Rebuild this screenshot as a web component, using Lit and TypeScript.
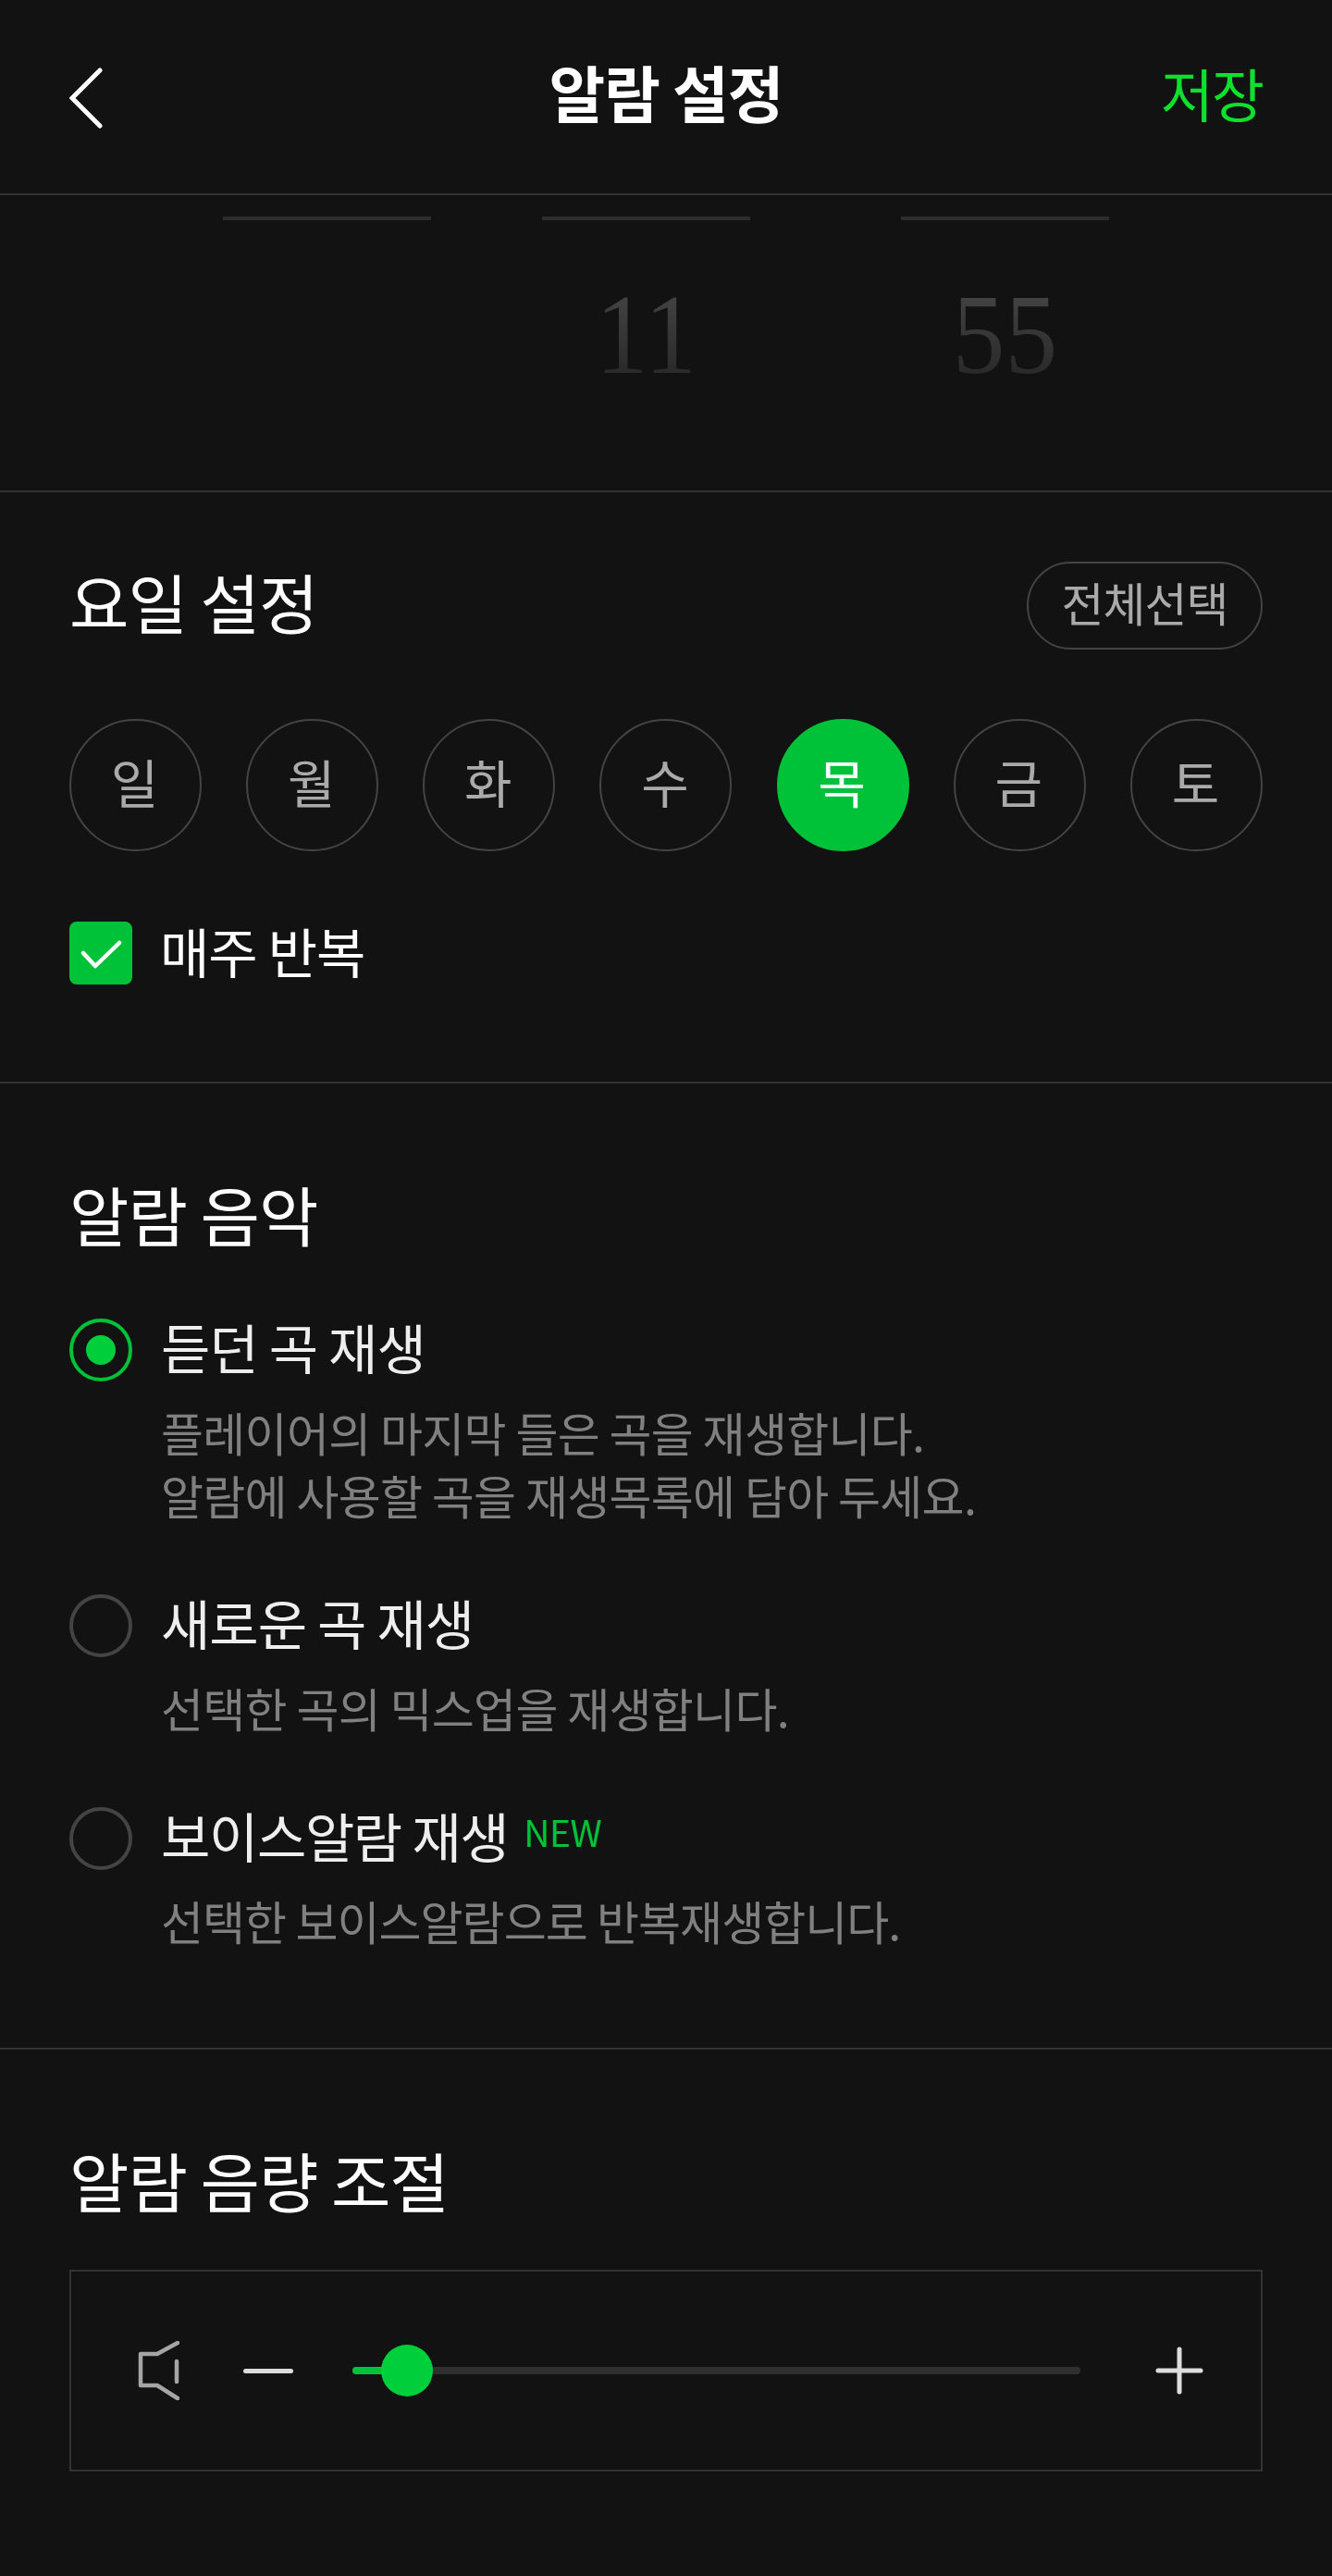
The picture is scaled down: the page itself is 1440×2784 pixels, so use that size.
import { LitElement, html, css } from "lit";
import { customElement } from "lit/decorators.js";

const DAYS = ["일", "월", "화", "수", "목", "금", "토"];

@customElement("app-root")
export class AppRoot extends LitElement {
  static styles = css`
    :host { display: block; width: 1440px; height: 2784px; background: #121212; color: #fff; overflow: hidden;
      font-family: "Noto Sans CJK KR", "Noto Sans", sans-serif; }
    * { box-sizing: border-box; }
    .header { height: 211px; border-bottom: 2px solid #333; display: flex; align-items: center; justify-content: space-between; padding: 2px 75px 0; position: relative; }
    .back { display: block; }
    .title { position: absolute; left: 0; right: 0; text-align: center; font-size: 66px; font-weight: 700; letter-spacing: -1px; line-height: 80px; top: 58px; }
    .save { font-size: 62px; color: #0de02d; letter-spacing: -2px; line-height: 80px; padding-bottom: 12px; }
    .picker { height: 321px; border-bottom: 2px solid #333; position: relative; }
    .col { position: absolute; top: 23px; width: 225px; border-top: 4px solid #2d2d2d; height: 200px; text-align: center; }
    .c1 { left: 241px; } .c2 { left: 586px; } .c3 { left: 974px; }
    .num { font-family: "Liberation Serif", serif; font-size: 122px; line-height: 122px; margin-top: 63px; transform: scaleX(.93);
      background: linear-gradient(#484848, #242424); -webkit-background-clip: text; background-clip: text; color: transparent; }
    .days-sec { height: 639px; border-bottom: 2px solid #333; padding: 75px 75px 0; }
    .row { display: flex; align-items: center; justify-content: space-between; }
    h2 { margin: 0; font-size: 70px; font-weight: 400; letter-spacing: -1px; line-height: 84px; padding-bottom: 10px; }
    .pill { width: 255px; height: 95px; border: 2px solid #444; border-radius: 48px; color: #aaa; font-size: 50px; letter-spacing: -1px; line-height: 70px; padding-bottom: 10px; display: flex; align-items: center; justify-content: center; }
    .days { display: flex; justify-content: space-between; margin-top: 75px; }
    .day { width: 143px; height: 143px; border-radius: 50%; border: 2px solid #444; color: #aaa; font-size: 56px; line-height: 70px; padding: 0 2px 9px 0; display: flex; align-items: center; justify-content: center; }
    .day.on { background: #00c239; border-color: #00c239; color: #fff; }
    .repeat { display: flex; align-items: center; gap: 30px; margin-top: 76px; font-size: 58px; letter-spacing: -1px; line-height: 68px; }
    .repeat span { margin: -3px 0 3px; }
    .check { width: 68px; height: 68px; border-radius: 8px; background: #00c239; display: flex; align-items: center; justify-content: center; padding-top: 2px; }
    .music { height: 1044px; border-bottom: 2px solid #333; padding: 99px 75px 0; }
    .opts { margin-top: 61px; display: flex; flex-direction: column; }
    .opt { display: grid; grid-template-columns: 68px 1fr; column-gap: 31px; }
    .opt + .opt { margin-top: 74px; }
    .radio { width: 68px; height: 68px; border-radius: 50%; border: 4px solid #444; display: flex; align-items: center; justify-content: center; }
    .radio.on { border-color: #00c239; }
    .radio.on i { display: block; width: 32px; height: 32px; border-radius: 50%; background: #00cf3c; }
    .lbl { font-size: 58px; color: #eee; letter-spacing: -1px; line-height: 68px; margin-top: -4px; display: flex; align-items: flex-start; }
    .lbl.tight { letter-spacing: -1.4px; }
    .new { font-size: 39px; color: #00c239; line-height: 60px; margin-left: 17px; letter-spacing: -0.5px; }
    .desc { grid-column: 2; margin-top: 20px; font-size: 50px; line-height: 68px; color: #808080; letter-spacing: -0.7px; white-space: pre-line; }
    .desc.tight { letter-spacing: -0.95px; }
    .vol { padding: 99px 75px 0; }
    .box { margin-top: 45px; height: 218px; border: 2px solid #333; display: flex; align-items: center; padding: 0 62px 0 71px; }
    .minus { margin-left: 69px; }
    .track { flex: 1; height: 8px; background: #2f2f2f; border-radius: 4px; position: relative; margin: 0 81px 0 64px; }
    .fill { position: absolute; left: 0; top: 0; height: 8px; width: 60px; background: #00c239; border-radius: 4px; }
    .thumb { position: absolute; left: 31px; top: -24px; width: 56px; height: 56px; border-radius: 50%; background: #00cf3c; }
    svg { display: block; flex: none; }
  `;

  render() {
    return html`
      <div class="header">
        <svg class="back" width="36" height="66" viewBox="0 0 36 66" fill="none" stroke="#fff" stroke-width="5" stroke-linecap="round"><path d="M33 3 3 33l30 30" /></svg>
        <div class="title">알람 설정</div>
        <div class="save">저장</div>
      </div>
      <div class="picker">
        <div class="col c1"></div>
        <div class="col c2"><div class="num">11</div></div>
        <div class="col c3"><div class="num">55</div></div>
      </div>
      <div class="days-sec">
        <div class="row"><h2>요일 설정</h2><div class="pill">전체선택</div></div>
        <div class="days">${DAYS.map((d, i) => html`<div class="day ${i === 4 ? "on" : ""}">${d}</div>`)}</div>
        <div class="repeat">
          <div class="check"><svg width="45" height="31" viewBox="0 0 45 31" fill="none" stroke="#fff" stroke-width="4.5" stroke-linecap="round" stroke-linejoin="round"><path d="M3 14 16 28 42 3"/></svg></div>
          <span>매주 반복</span>
        </div>
      </div>
      <div class="music">
        <h2>알람 음악</h2>
        <div class="opts">
          <div class="opt"><div class="radio on"><i></i></div><div class="lbl">듣던 곡 재생</div>
            <div class="desc">플레이어의 마지막 들은 곡을 재생합니다.
알람에 사용할 곡을 재생목록에 담아 두세요.</div></div>
          <div class="opt"><div class="radio"></div><div class="lbl">새로운 곡 재생</div>
            <div class="desc">선택한 곡의 믹스업을 재생합니다.</div></div>
          <div class="opt"><div class="radio"></div><div class="lbl tight">보이스알람 재생<span class="new">NEW</span></div>
            <div class="desc tight">선택한 보이스알람으로 반복재생합니다.</div></div>
        </div>
      </div>
      <div class="vol">
        <h2>알람 음량 조절</h2>
        <div class="box">
          <svg width="46" height="64" viewBox="0 0 46 64" fill="none" stroke="#a5a5a5" stroke-width="4.5" stroke-linecap="round" stroke-linejoin="round"><path d="M44 2 22 14H4v34h18l22 14M43 22v22"/></svg>
          <svg class="minus" width="54" height="5" viewBox="0 0 54 5"><rect width="54" height="5" rx="2.5" fill="#ddd"/></svg>
          <div class="track"><div class="fill"></div><div class="thumb"></div></div>
          <svg width="52" height="52" viewBox="0 0 52 52" stroke="#ddd" stroke-width="5" stroke-linecap="round"><path d="M26 3v46M3 26h46"/></svg>
        </div>
      </div>
    `;
  }
}
